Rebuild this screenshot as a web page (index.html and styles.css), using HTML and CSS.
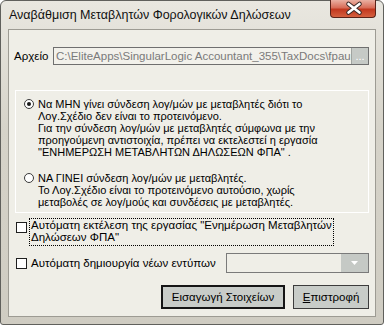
FILE: index.html
```html
<!DOCTYPE html>
<html>
<head>
<meta charset="utf-8">
<link rel="stylesheet" href="styles.css">
</head>
<body>
<div class="window">
  <div class="titlebar">
    <div class="title">Αναβάθμιση Μεταβλητών Φορολογικών Δηλώσεων</div>
    <div class="close">
      <svg width="46" height="18" viewBox="0 0 46 18">
        <path d="M18.5 5 L29.5 13.5 M29.5 5 L18.5 13.5" stroke="#3a2a28" stroke-width="4.6" stroke-linecap="round"/>
        <path d="M18.5 5 L29.5 13.5 M29.5 5 L18.5 13.5" stroke="#ffffff" stroke-width="2.6" stroke-linecap="round"/>
      </svg>
    </div>
  </div>
  <div class="client">
    <div class="file-row">
      <span class="file-label">Αρχείο</span>
      <div class="file-box">
        <span class="file-text">C:\EliteApps\SingularLogic Accountant_355\TaxDocs\fpaupd.mdb</span>
        <span class="file-btn">...</span>
      </div>
    </div>
    <div class="radio-panel">
      <div class="radio-item">
        <span class="radio checked"></span>
        <span class="radio-text">Να ΜΗΝ γίνει σύνδεση λογ/μών με μεταβλητές διότι το<br>Λογ.Σχέδιο δεν είναι το προτεινόμενο.<br>Για την σύνδεση λογ/μών με μεταβλητές σύμφωνα με την<br>προηγούμενη αντιστοιχία, πρέπει να εκτελεστεί η εργασία<br>"ΕΝΗΜΕΡΩΣΗ ΜΕΤΑΒΛΗΤΩΝ ΔΗΛΩΣΕΩΝ ΦΠΑ" .</span>
      </div>
      <div class="radio-item second">
        <span class="radio"></span>
        <span class="radio-text">ΝΑ ΓΙΝΕΙ σύνδεση λογ/μών με μεταβλητές.<br>Το Λογ.Σχέδιο είναι το προτεινόμενο αυτούσιο, χωρίς<br>μεταβολές σε λογ/μούς και συνδέσεις με μεταβλητές.</span>
      </div>
    </div>
    <div class="check-row first">
      <span class="checkbox top"></span>
      <span class="check-label focus">Αυτόματη εκτέλεση της εργασίας "Ενημέρωση Μεταβλητών<br>Δηλώσεων ΦΠΑ"</span>
    </div>
    <div class="check-row second">
      <span class="checkbox"></span>
      <span class="check-label">Αυτόματη δημιουργία νέων εντύπων</span>
      <div class="combo">
        <span class="combo-btn"><svg width="7" height="4" viewBox="0 0 7 4"><path d="M0 0 H7 L3.5 4 Z" fill="#ffffff"/></svg></span>
      </div>
    </div>
    <div class="button-row">
      <div class="btn default">Εισαγωγή Στοιχείων</div>
      <div class="btn"><u>Ε</u>πιστροφή</div>
    </div>
  </div>
</div>
</body>
</html>
```
FILE: styles.css
```css
html, body {
  margin: 0;
  padding: 0;
  background: #ffffff;
}
body {
  font-family: "Liberation Sans", Arial, sans-serif;
  font-size: 11px;
  color: #000;
}
.window {
  width: 384px;
  height: 325px;
  box-sizing: border-box;
  border: 1px solid #60605c;
  border-radius: 6px 6px 3px 3px;
  background: linear-gradient(#e9e7e0, #d6d3c9 40%, #cfccc2);
  padding: 0 7px 7px;
  display: flex;
  flex-direction: column;
}
.titlebar {
  height: 28px;
  display: flex;
  align-items: flex-start;
  flex-shrink: 0;
}
.title {
  padding: 7px 0 0 1px;
  font-size: 12.5px;
  color: #111;
  white-space: nowrap;
}
.close {
  margin-left: auto;
  margin-top: -1px;
  width: 46px;
  height: 18px;
  box-sizing: border-box;
  border: 1px solid #5a2218;
  border-top: none;
  border-radius: 0 0 4px 4px;
  background: linear-gradient(#eab0a2, #d86d58 45%, #c2381f 55%, #d5603f);
  overflow: hidden;
}
.close svg {
  display: block;
  margin: -1px 0 0 -1px;
}
.client {
  flex: 1;
  background: #efeee7;
  border: 1px solid #9d9b93;
  padding: 0 6px;
  display: flex;
  flex-direction: column;
}
.file-row {
  margin-top: 17px;
  display: flex;
  align-items: center;
  height: 18px;
}
.file-label {
  margin-left: -1px;
  width: 39px;
  font-size: 11.5px;
}
.file-box {
  flex: 1;
  height: 18px;
  box-sizing: border-box;
  border: 1px solid #6f6f6f;
  background: #f2f1eb;
  display: flex;
  align-items: stretch;
  overflow: hidden;
}
.file-text {
  flex: 1;
  padding-left: 2px;
  line-height: 16px;
  color: #7a7a7a;
  white-space: nowrap;
  overflow: hidden;
  font-size: 11.5px;
}
.file-btn {
  width: 16px;
  background: #c6cac6;
  color: #fff;
  text-align: center;
  line-height: 16px;
  border-left: 1px solid #a0a4a0;
}
.radio-panel {
  margin-top: 25px;
  border: 1px solid #ffffff;
  padding: 7px 0 4px 8px;
}
.radio-item {
  display: flex;
  align-items: flex-start;
  line-height: 12px;
}
.radio-item.second {
  margin-top: 14px;
}
.radio {
  width: 10px;
  height: 10px;
  box-sizing: border-box;
  margin-top: 1px;
  border: 1px solid #3a3a3a;
  border-radius: 50%;
  background: #fff;
  flex-shrink: 0;
  display: flex;
  align-items: center;
  justify-content: center;
}
.radio.checked::after {
  content: "";
  width: 4px;
  height: 4px;
  border-radius: 50%;
  background: #1a1a1a;
}
.radio-text {
  margin-left: 4px;
  white-space: nowrap;
}
.check-row {
  display: flex;
  padding-left: 1px;
}
.check-row.first {
  margin-top: 5px;
  align-items: flex-start;
}
.check-row.second {
  margin-top: 7px;
  align-items: center;
  height: 20px;
}
.checkbox {
  width: 11px;
  height: 11px;
  box-sizing: border-box;
  border: 1px solid #1f1f1f;
  background: #fff;
  flex-shrink: 0;
}
.checkbox.top {
  margin-top: 4px;
}
.check-label {
  margin-left: 3px;
  line-height: 12px;
  font-size: 11.5px;
  white-space: nowrap;
}
.check-label.focus {
  border: 1px dotted #000;
  padding: 0 1px 2px 1px;
  margin-left: 2px;
}
.check-row.second .check-label {
  margin-left: 4px;
}
.combo {
  margin-left: auto;
  width: 143px;
  height: 20px;
  box-sizing: border-box;
  border: 1px solid #7a7a7a;
  background: #efeee7;
  display: flex;
  justify-content: flex-end;
}
.combo-btn {
  width: 27px;
  background: #c5c9c5;
  display: flex;
  align-items: center;
  justify-content: center;
}
.combo-btn svg {
  display: block;
}
.button-row {
  margin-top: 12px;
  display: flex;
  justify-content: flex-end;
  gap: 8px;
}
.btn {
  height: 24px;
  box-sizing: border-box;
  border: 1px solid #3c3c3c;
  background: #c8ccc8;
  display: flex;
  align-items: center;
  justify-content: center;
  font-size: 11.5px;
  width: 76px;
}
.btn.default {
  width: 124px;
  border: 2px solid #151515;
}
.btn u {
  text-decoration: underline;
}
```
